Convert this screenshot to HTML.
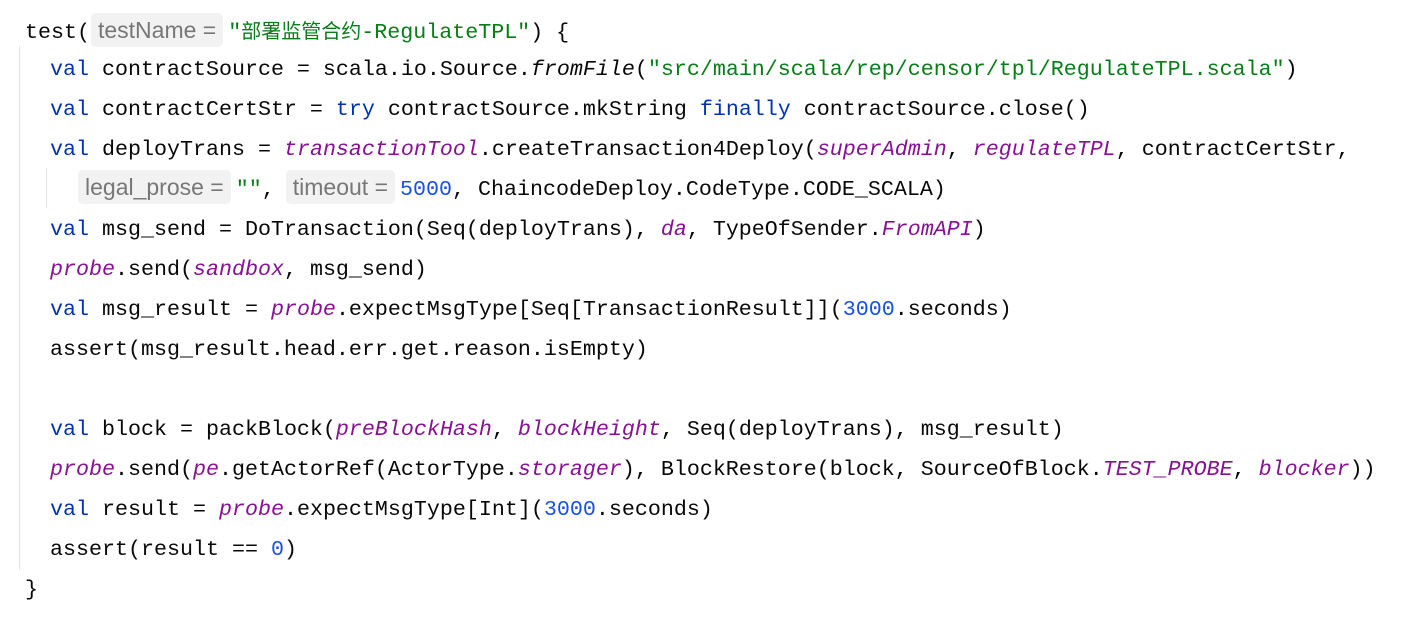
<!DOCTYPE html>
<html><head><meta charset="utf-8"><style>
html,body{margin:0;padding:0;background:#fff;width:1405px;height:620px;overflow:hidden;position:relative}
.l{position:absolute;height:40px;line-height:40px;font-family:"Liberation Mono",monospace;font-size:21.67px;color:#080808;white-space:pre}
.k{color:#0033b3}.s{color:#067d17}.n{color:#1750eb}.i{color:#871094;font-style:italic}
.h{display:inline-block;background:#f2f2f2;color:#777;font-family:"Liberation Sans",sans-serif;font-size:23px;line-height:34px;height:34px;border-radius:5px;padding:0 7px;vertical-align:middle;margin:0 5px 0 1px;position:relative;top:-2px}
.cjk{font-family:"Noto Sans CJK SC",sans-serif;font-size:20px}
.g{position:absolute;width:1px;background:#e4e4e4}
</style></head><body>
<div class="g" style="left:19px;top:46px;height:524px"></div>
<div class="g" style="left:46px;top:168px;height:40px"></div>
<div class="l" style="left:25px;top:10px">test(<span class="h">testName =</span><span class="s">"<span class="cjk">部署监管合约</span>-RegulateTPL"</span>) {</div>
<div class="l" style="left:50px;top:50px"><span class="k">val</span> contractSource = scala.io.Source.<i>fromFile</i>(<span class="s">"src/main/scala/rep/censor/tpl/RegulateTPL.scala"</span>)</div>
<div class="l" style="left:50px;top:90px"><span class="k">val</span> contractCertStr = <span class="k">try</span> contractSource.mkString <span class="k">finally</span> contractSource.close()</div>
<div class="l" style="left:50px;top:130px"><span class="k">val</span> deployTrans = <span class="i">transactionTool</span>.createTransaction4Deploy(<span class="i">superAdmin</span>, <span class="i">regulateTPL</span>, contractCertStr,</div>
<div class="l" style="left:77px;top:170px"><span class="h">legal_prose =</span><span class="s">""</span>, <span class="h" style="margin-left:-2px">timeout =</span><span class="n">5000</span>, ChaincodeDeploy.CodeType.CODE_SCALA)</div>
<div class="l" style="left:50px;top:210px"><span class="k">val</span> msg_send = DoTransaction(Seq(deployTrans), <span class="i">da</span>, TypeOfSender.<span class="i">FromAPI</span>)</div>
<div class="l" style="left:50px;top:250px"><span class="i">probe</span>.send(<span class="i">sandbox</span>, msg_send)</div>
<div class="l" style="left:50px;top:290px"><span class="k">val</span> msg_result = <span class="i">probe</span>.expectMsgType[Seq[TransactionResult]](<span class="n">3000</span>.seconds)</div>
<div class="l" style="left:50px;top:330px">assert(msg_result.head.err.get.reason.isEmpty)</div>
<div class="l" style="left:50px;top:410px"><span class="k">val</span> block = packBlock(<span class="i">preBlockHash</span>, <span class="i">blockHeight</span>, Seq(deployTrans), msg_result)</div>
<div class="l" style="left:50px;top:450px"><span class="i">probe</span>.send(<span class="i">pe</span>.getActorRef(ActorType.<span class="i">storager</span>), BlockRestore(block, SourceOfBlock.<span class="i">TEST_PROBE</span>, <span class="i">blocker</span>))</div>
<div class="l" style="left:50px;top:490px"><span class="k">val</span> result = <span class="i">probe</span>.expectMsgType[Int](<span class="n">3000</span>.seconds)</div>
<div class="l" style="left:50px;top:530px">assert(result == <span class="n">0</span>)</div>
<div class="l" style="left:25px;top:570px">}</div>
</body></html>
